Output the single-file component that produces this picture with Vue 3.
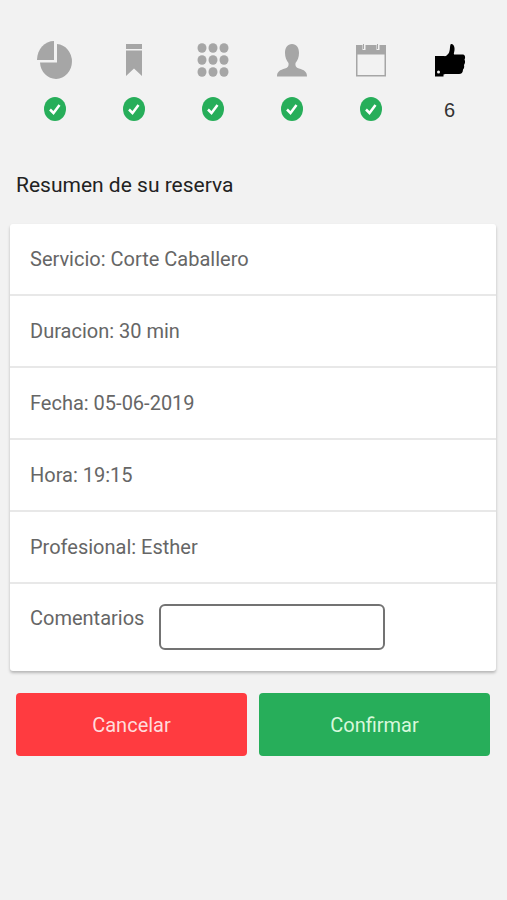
<script setup>
import { ref } from 'vue'

const steps = [
  { icon: 'pie', label: 'Servicio', done: true },
  { icon: 'bookmark', label: 'Duracion', done: true },
  { icon: 'grid', label: 'Categoria', done: true },
  { icon: 'person', label: 'Profesional', done: true },
  { icon: 'calendar', label: 'Fecha', done: true },
  { icon: 'like', label: 'Confirmar', done: false }
]

const rows = [
  { label: 'Servicio', value: 'Corte Caballero' },
  { label: 'Duracion', value: '30 min' },
  { label: 'Fecha', value: '05-06-2019' },
  { label: 'Hora', value: '19:15' },
  { label: 'Profesional', value: 'Esther' }
]

// positions of the dots in the 3x3 grid icon
const dotsX = [7, 18, 29]
const dotsY = [8, 20, 32]

const comments = ref('')
</script>

<template>
  <main class="booking">
    <ol class="steps">
      <li v-for="(step, i) in steps" :key="step.icon" class="step" :class="{ current: !step.done }" :aria-label="step.label">
        <svg class="icon" viewBox="0 0 36 40" aria-hidden="true">
          <template v-if="step.icon === 'pie'">
            <path d="M17 1V20H0A17 19 0 0 1 17 1Z" />
            <path d="M20 4A16 17.500 0 1 1 3 22.500H20Z" />
          </template>
          <template v-else-if="step.icon === 'bookmark'">
            <path d="M10 4H26V9H10ZM10 10.500H26V36L18 28.500L10 36Z" />
          </template>
          <template v-else-if="step.icon === 'grid'">
            <template v-for="y in dotsY" :key="y">
              <ellipse v-for="x in dotsX" :key="x" :cx="x" :cy="y" rx="4.500" ry="4.800" />
            </template>
          </template>
          <template v-else-if="step.icon === 'person'">
            <path d="M18 4C22.500 4 25 7.500 25 13C25 17.500 23.500 20.500 21.500 23C21 26 22 27.500 25 28.500C30 30 33 31.500 33 36.500H3C3 31.500 6 30 11 28.500C14 27.500 15 26 14.500 23C12.500 20.500 11 17.500 11 13C11 7.500 13.500 4 18 4Z" />
          </template>
          <template v-else-if="step.icon === 'calendar'">
            <path d="M3 5H33V36.500H3ZM4.500 14.500V35H31.500V14.500Z" fill-rule="evenodd" />
            <path class="rings" d="M11 4V10M25 4V10" />
            <path class="pins" d="M10.500 4V9M24.500 4V9" />
          </template>
          <template v-else>
            <path d="M3 16H12C13.500 16.500 15 15.500 16.500 13.500C18.500 11 17.500 5 19 4C21.500 3.500 23 7 22.500 10C22.300 12 21.500 13.500 22 14.500H31C33.500 15 33.500 18 32.500 19.500C33.500 21.500 33 23.500 32 25C32.500 27 32 28.500 31 29.500C31 32.500 29.500 34 27 34H16C14 34 12.500 34 11.500 34.500V36.500H3Z" />
            <circle class="cuff" cx="6.500" cy="32" r="1.500" />
          </template>
        </svg>
        <svg v-if="step.done" class="check" viewBox="0 0 22 24" role="img" aria-label="Completado">
          <ellipse cx="11" cy="12" rx="11" ry="12" />
          <path d="M6 12.500L9.500 16L15.500 8" />
        </svg>
        <span v-else class="number">{{ i + 1 }}</span>
      </li>
    </ol>

    <h1 class="title">Resumen de su reserva</h1>

    <section class="card">
      <p v-for="row in rows" :key="row.label" class="row">{{ row.label }}: {{ row.value }}</p>
      <div class="row comments">
        <label for="comments">Comentarios</label>
        <input id="comments" v-model="comments" type="text" />
      </div>
    </section>

    <div class="actions">
      <button type="button" class="cancel">Cancelar</button>
      <button type="button" class="confirm">Confirmar</button>
    </div>
  </main>
</template>

<style>
body { margin: 0; background: #f2f2f2; }
</style>

<style scoped>
.booking {
  padding: 40px 11px 24px 10px;
  font-family: Roboto, "Liberation Sans", sans-serif;
  font-size: 20px;
  line-height: 24px;
  color: #666;
}

.steps {
  display: grid;
  grid-template-columns: repeat(6, 1fr);
  margin: 0 7px 0 5px;
  padding: 0;
  list-style: none;
}
.step { display: flex; flex-direction: column; align-items: center; gap: 17px; }
.icon { width: 36px; height: 40px; fill: #a6a6a6; }
.current .icon { fill: #000; }
.rings { stroke: #f2f2f2; stroke-width: 3; }
.pins { stroke: #a6a6a6; stroke-width: 1; }
.cuff { fill: #f2f2f2; }
.check { width: 22px; height: 24px; fill: #27ae5a; }
.check path { fill: none; stroke: #fff; stroke-width: 2.500; }
.number { font-family: "Liberation Sans", sans-serif; font-size: 20px; line-height: 26px; color: #333; }

.title { margin: 50px 6px 27px; font-size: 21px; font-weight: 400; line-height: 24px; color: #222; }

.card { background: #fff; border-radius: 3px; box-shadow: 0 2px 3px rgba(0, 0, 0, .25); }
.row { margin: 0; padding: 23px 20px; }
.row + .row { border-top: 2px solid #e8e8e8; }
.comments { display: flex; align-items: flex-start; gap: 15px; }
.row.comments { padding: 20px 20px 21px; }
.comments label { padding-top: 2px; }
.comments input {
  box-sizing: border-box;
  flex: 0 1 226px;
  min-width: 0;
  height: 46px;
  padding: 0 10px;
  border: 2px solid #737373;
  border-radius: 6px;
  background: #fff;
  font: inherit;
  color: inherit;
}

.actions { display: grid; grid-template-columns: 1fr 1fr; gap: 12px; margin: 22px 6px 0; }
.actions button {
  padding: 20px 12px 19px;
  border: 0;
  border-radius: 4px;
  font: inherit;
  color: #fff;
  cursor: pointer;
}
.actions .cancel { background: #ff3b40; color: #ffdcdc; }
.actions .confirm { background: #27ae5a; color: #d8f8dc; }
</style>
